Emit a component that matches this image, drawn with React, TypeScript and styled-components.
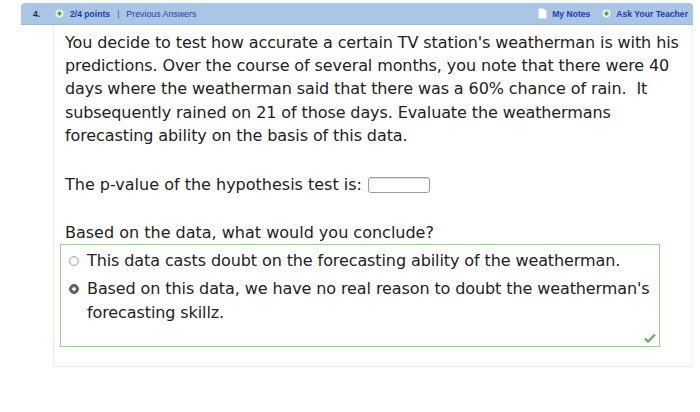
import styled, { createGlobalStyle } from "styled-components";

const GlobalStyle = createGlobalStyle`
  html, body {
    margin: 0;
    padding: 0;
    background: #ffffff;
  }
`;

function PlusIcon(): JSX.Element {
  return (
    <svg width="9" height="9" viewBox="0 0 10 10">
      <circle cx="5" cy="5" r="4.6" fill="#f4f6f4" stroke="#c9cfc9" strokeWidth="0.8" />
      <path d="M5 2.6v4.8M2.6 5h4.8" stroke="#2f9a2f" strokeWidth="1.7" />
    </svg>
  );
}

function NoteIcon(): JSX.Element {
  return (
    <svg width="9" height="11" viewBox="0 0 10 12">
      <path d="M0.5 0.5h6l3 3v8h-9z" fill="#ffffff" stroke="#d8d8d8" strokeWidth="0.8" />
    </svg>
  );
}

function CheckIcon(): JSX.Element {
  return (
    <svg width="12" height="10" viewBox="0 0 12 10">
      <path d="M1 5.5l3 3L11 1.5" fill="none" stroke="#6aaf5a" strokeWidth="2.4" />
    </svg>
  );
}

function App(): JSX.Element {
  return (
    <>
      <GlobalStyle />
      <Page>
        <Header>
          <Number>4.</Number>
          <PlusIcon />
          <Points>2/4 points</Points>
          <Sep>|</Sep>
          <Prev>Previous Answers</Prev>
          <Spacer />
          <NoteIcon />
          <HeaderLink>My Notes</HeaderLink>
          <PlusIcon />
          <HeaderLink>Ask Your Teacher</HeaderLink>
        </Header>
        <Panel>
          <Question>
            You decide to test how accurate a certain TV station's weatherman is with his
            <br />
            predictions. Over the course of several months, you note that there were 40
            <br />
            days where the weatherman said that there was a 60% chance of rain.&nbsp; It
            <br />
            subsequently rained on 21 of those days. Evaluate the weathermans
            <br />
            forecasting ability on the basis of this data.
          </Question>
          <Prompt>
            The p-value of the hypothesis test is: <AnswerBox />
          </Prompt>
          <Conclude>Based on the data, what would you conclude?</Conclude>
          <Choices>
            <Choice>
              <Radio $checked={false} />
              <span>This data casts doubt on the forecasting ability of the weatherman.</span>
            </Choice>
            <Choice>
              <Radio $checked={true} />
              <span>
                Based on this data, we have no real reason to doubt the weatherman's
                <br />
                forecasting skillz.
              </span>
            </Choice>
            <Mark>
              <CheckIcon />
            </Mark>
          </Choices>
        </Panel>
      </Page>
    </>
  );
}

export default App;

const Page = styled.div`
  width: 672px;
  margin: 3px 0 0 21px;
  font-family: "DejaVu Sans", Verdana, sans-serif;
`;

const Header = styled.div`
  height: 21px;
  display: flex;
  align-items: center;
  gap: 5px;
  padding: 0 5px 0 12px;
  background: #aac6e6;
  border-top-left-radius: 4px;
  border-top-right-radius: 4px;
  border-bottom: 1px solid #9db6d4;
  font-family: "Liberation Sans", Arial, sans-serif;
  font-size: 8.6px;
`;

const Number = styled.span`
  font-weight: bold;
  color: #1c2a4a;
  width: 17px;
`;

const Points = styled.span`
  font-weight: bold;
  color: #1a3ea8;
  margin-left: 1px;
`;

const Sep = styled.span`
  color: #4a5a7a;
  margin: 0 2px;
`;

const Prev = styled.span`
  color: #1a3ea8;
  font-size: 8.8px;
`;

const Spacer = styled.span`
  flex: 1;
`;

const HeaderLink = styled.span`
  font-weight: bold;
  color: #1a3ea8;
  margin-right: 7px;
  &:last-child {
    margin-right: 0;
  }
`;

const Panel = styled.div`
  margin-left: 32px;
  padding: 6px 4px 19px 11px;
  border-left: 1px solid #ececec;
  border-right: 1px solid #f2f2f2;
  border-bottom: 1px solid #ececec;
  color: #222;
  white-space: nowrap;
`;

const Question = styled.p`
  margin: 0;
  font-size: 16px;
  letter-spacing: -0.1px;
  line-height: 23.2px;
`;

const Prompt = styled.p`
  margin: 26px 0 0;
  font-size: 16px;
  line-height: 23px;
  display: flex;
  align-items: center;
  gap: 6px;
`;

const AnswerBox = styled.span`
  display: inline-block;
  width: 60px;
  height: 14px;
  border: 1px solid #9a9a9a;
  border-radius: 3px;
  box-shadow: inset 0 1px 1px #ddd;
`;

const Conclude = styled.p`
  margin: 25px 0 0;
  font-size: 16px;
  line-height: 23px;
`;

const Choices = styled.div`
  position: relative;
  margin: 0 0 0 -5px;
  width: 590px;
  padding: 4px 0 17px 8px;
  border: 1px solid #9fcf8f;
  font-size: 16px;
  letter-spacing: -0.1px;
  line-height: 24px;
`;

const Choice = styled.div`
  display: flex;
  align-items: flex-start;
  gap: 8px;
  margin-bottom: 4px;
`;

const Radio = styled.span<{ $checked: boolean }>`
  flex: none;
  margin-top: 7px;
  width: 8px;
  height: 8px;
  border-radius: 50%;
  border: 1px solid ${(p) => (p.$checked ? "#555" : "#aaa")};
  background: ${(p) =>
    p.$checked
      ? "radial-gradient(circle, #ffffff 0 1.5px, #666 2px)"
      : "radial-gradient(circle, #ffffff 0 2px, #ececec 4px)"};
`;

const Mark = styled.span`
  position: absolute;
  right: 3px;
  bottom: 3px;
  display: flex;
`;
